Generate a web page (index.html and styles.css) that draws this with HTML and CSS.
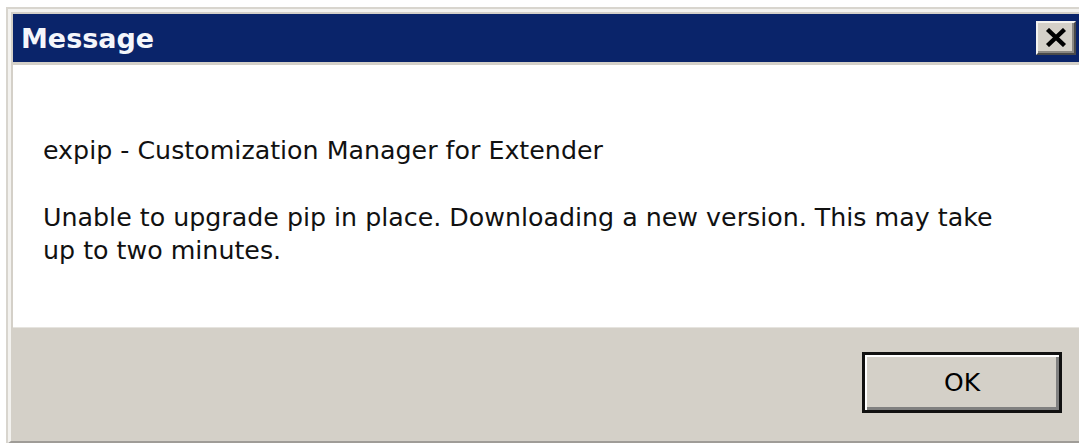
FILE: index.html
```html
<!DOCTYPE html>
<html lang="en">
<head>
<meta charset="utf-8">
<title>Message</title>
<link rel="stylesheet" href="styles.css">
</head>
<body>
  <div class="window">
    <div class="frame">
      <div class="titlebar">
        <span class="title">Message</span>
        <button class="close" type="button" aria-label="Close">
          <svg width="22" height="19" viewBox="0 0 22 19" aria-hidden="true">
            <path d="M2.5 1.5 L19.5 17.5 M19.5 1.5 L2.5 17.5" stroke="#000" stroke-width="4.4" stroke-linecap="butt" fill="none"/>
          </svg>
        </button>
      </div>
      <div class="client">
        <div class="message">
          <p>expip - Customization Manager for Extender</p>
          <p>Unable to upgrade pip in place. Downloading a new version. This may take<br>up to two minutes.</p>
        </div>
        <div class="actions">
          <button class="ok" type="button">OK</button>
        </div>
      </div>
    </div>
  </div>
</body>
</html>
```
FILE: styles.css
```css
html, body {
  margin: 0;
  padding: 0;
  background: #ffffff;
  overflow: hidden;
  width: 1079px;
  height: 443px;
}

body {
  font-family: "DejaVu Sans", "Liberation Sans", sans-serif;
  color: #000;
}

/* outer window frame, classic 3D edges */
.window {
  box-sizing: border-box;
  width: 1079px;
  margin: 7px 0 0 6px;
  background: #d4d0c8;
  border: 2px solid;
  border-color: #d8d5ce #404040 #404040 #d8d5ce;
  border-bottom: none;
}

.frame {
  border-top: 3px solid #f3f2ef;
  border-left: 3px solid #f3f2ef;
  border-bottom: 2px solid #9f9c97;
  padding: 2px 2px 0 2px;
}

.titlebar {
  height: 48px;
  background: #0a246a;
  display: flex;
  align-items: center;
  justify-content: space-between;
  padding: 0 5px 0 8px;
}

.title {
  color: #f4f6fb;
  font-family: "DejaVu Sans", sans-serif;
  font-weight: bold;
  font-size: 27px;
  line-height: 1;
}

.close {
  box-sizing: border-box;
  width: 40px;
  height: 34px;
  padding: 0;
  background: #d4d0c8;
  border: 2px solid;
  border-color: #f4f3f0 #4a4a4a #4a4a4a #f4f3f0;
  box-shadow: inset -2px -2px 0 #8a8884;
  display: flex;
  align-items: center;
  justify-content: center;
}

.close svg {
  display: block;
  margin: 0 1px 1px 0;
}

.client {
  margin-top: 3px;
  background: #d4d0c8;
}

.message {
  box-sizing: border-box;
  height: 262px;
  background: #ffffff;
  padding: 69px 30px 0 30px;
  font-size: 25.3px;
  line-height: 33px;
  color: #111;
}

.message p {
  margin: 0 0 34px 0;
}

.actions {
  box-sizing: border-box;
  height: 114px;
  border-top: 1px solid #e6e4df;
  display: flex;
  justify-content: flex-end;
  align-items: flex-start;
  padding: 24px 19px 0 0;
}

.ok {
  box-sizing: border-box;
  width: 200px;
  height: 61px;
  background: #d4d0c8;
  border: 3px solid #111;
  box-shadow: inset 2px 2px 0 #ffffff, inset -3px -3px 0 #808080;
  font-family: "DejaVu Sans", sans-serif;
  font-size: 25px;
  color: #000;
  padding: 0;
}
```
